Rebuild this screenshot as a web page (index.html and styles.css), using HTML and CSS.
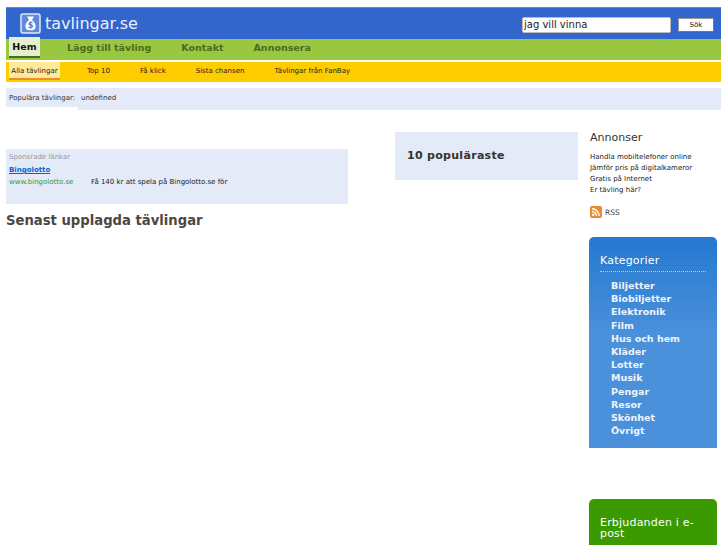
FILE: index.html
```html
<!DOCTYPE html>
<html lang="sv">
<head>
    <meta charset="UTF-8">
    <title>tavlingar.se</title>
    <link rel="stylesheet" href="styles.css">
</head>
<body>
    <div class="wrap">
        <header class="top">
            <a class="logo" href="#">
                <svg class="logo-icon" width="21" height="21" viewBox="0 0 21 21">
                    <rect x="1" y="1" width="19" height="19" rx="2" fill="#5f8ad8" stroke="#dfe8f8" stroke-width="1.5"/>
                    <path d="M7 3.500h7l-2 3.500c2.500 1.500 4 4.500 3.500 7.500-.3 2-2 2.800-5 2.800s-4.700-.8-5-2.800C5 11.500 6.500 8.500 9 7z" fill="#fff"/>
                    <text x="10.500" y="15" class="logo-dollar">$</text>
                </svg>
                <span>tavlingar.se</span>
            </a>
            <form class="search">
                <input class="search-input" type="text" value="jag vill vinna">
                <button class="search-btn" type="button">Sök</button>
            </form>
        </header>

        <nav class="main-nav">
            <a class="active" href="#">Hem</a>
            <a href="#">Lägg till tävling</a>
            <a href="#">Kontakt</a>
            <a href="#">Annonsera</a>
        </nav>

        <nav class="sub-nav">
            <a class="active" href="#">Alla tävlingar</a>
            <a href="#">Top 10</a>
            <a href="#">Få klick</a>
            <a href="#">Sista chansen</a>
            <a href="#">Tävlingar från FanBay</a>
        </nav>

        <div class="popular">
            <span class="popular-label">Populära tävlingar:</span>
            <span class="popular-value">undefined</span>
        </div>

        <div class="columns">
            <main class="content">
                <div class="sponsored">
                    <div class="sponsored-title">Sponsrade länkar</div>
                    <a class="sponsored-link" href="#">Bingolotto</a>
                    <div class="sponsored-row">
                        <span class="sponsored-url">www.bingolotto.se</span>
                        <span>Få 140 kr att spela på Bingolotto.se för</span>
                    </div>
                </div>
                <h1>Senast upplagda tävlingar</h1>
            </main>

            <section class="top-ten">
                <h2>10 populäraste</h2>
            </section>

            <aside class="sidebar">
                <h3>Annonser</h3>
                <ul class="ads">
                    <li><a href="#">Handla mobiltelefoner online</a></li>
                    <li><a href="#">Jämför pris på digitalkameror</a></li>
                    <li><a href="#">Gratis på Internet</a></li>
                    <li><a href="#">Er tävling här?</a></li>
                </ul>
                <a class="rss" href="#">
                    <svg width="12" height="12" viewBox="0 0 12 12">
                        <rect width="12" height="12" rx="2" fill="#f08a2c"/>
                        <circle cx="3.200" cy="8.800" r="1.200" fill="#fff"/>
                        <path d="M2 5.500a4.500 4.500 0 0 1 4.500 4.500M2 2.800a7.200 7.200 0 0 1 7.200 7.200" fill="none" stroke="#fff" stroke-width="1.400"/>
                    </svg>
                    RSS
                </a>

                <div class="box box-blue">
                    <h4>Kategorier</h4>
                    <ul>
                        <li>Biljetter</li>
                        <li>Biobiljetter</li>
                        <li>Elektronik</li>
                        <li>Film</li>
                        <li>Hus och hem</li>
                        <li>Kläder</li>
                        <li>Lotter</li>
                        <li>Musik</li>
                        <li>Pengar</li>
                        <li>Resor</li>
                        <li>Skönhet</li>
                        <li>Övrigt</li>
                    </ul>
                </div>

                <div class="box box-green">
                    <h4>Erbjudanden i e-post</h4>
                </div>
            </aside>
        </div>
    </div>
</body>
</html>
```

FILE: styles.css
```css
/* Reset */
* {
    margin: 0;
    padding: 0;
    box-sizing: border-box;
}

html, body {
    height: 545px;
    overflow: hidden;
}

body {
    font-family: "DejaVu Sans", sans-serif;
    background-color: #fff;
    color: #000;
}

a {
    text-decoration: none;
    color: inherit;
}

ul {
    list-style: none;
}

.wrap {
    width: 715px;
    margin-left: 6px;
    padding-top: 7px;
}

/* Header */
.top {
    height: 32px;
    background-color: #3366cc;
    border-top: 1px solid #5f86d6;
    display: flex;
    justify-content: space-between;
    align-items: center;
}

.logo {
    display: flex;
    align-items: center;
    gap: 4px;
    margin-left: 14px;
    color: #e8effa;
    font-size: 16px;
}

.logo-icon {
    display: block;
}

.logo-dollar {
    font-size: 8px;
    font-weight: bold;
    fill: #4a78cc;
    text-anchor: middle;
}

.search {
    display: flex;
    align-items: center;
    gap: 7px;
    margin: 2px 7px 0 0;
}

.search-input {
    width: 149px;
    height: 16px;
    border: 1px solid #bbb;
    border-radius: 2px;
    padding: 0 1px;
    font-family: "DejaVu Sans", sans-serif;
    font-size: 10px;
    color: #222;
}

.search-btn {
    width: 36px;
    height: 14px;
    margin-top: 1px;
    background-color: #fff;
    border: 1px solid #999;
    border-right-color: #777;
    border-bottom-color: #777;
    font-family: "DejaVu Sans", sans-serif;
    font-size: 7px;
    color: #222;
}

/* Main nav */
.main-nav {
    height: 21px;
    background-color: #99c73f;
    display: flex;
    padding-left: 3px;
}

.main-nav a {
    margin-right: 30px;
    font-size: 9.500px;
    font-weight: bold;
    line-height: 18px;
    white-space: nowrap;
    color: #4c6b1f;
}

.main-nav a.active {
    width: 31px;
    height: 21px;
    margin: -2px 27px 0 0;
    background-color: #e4efcf;
    border-bottom: 2px solid #4c6b1f;
    color: #111;
    text-align: center;
    line-height: 20px;
}

/* Sub nav */
.sub-nav {
    height: 20px;
    margin-top: 2px;
    background-color: #ffcc00;
    display: flex;
    align-items: flex-start;
    padding-left: 3px;
    font-size: 7px;
    color: #222;
}

.sub-nav a {
    margin-right: 30px;
    line-height: 16px;
    padding-top: 1px;
    white-space: nowrap;
}

.sub-nav a.active {
    width: 51px;
    height: 18px;
    background-color: #ffe99a;
    border-bottom: 2px solid #f08a2c;
    text-align: center;
    margin-right: 27px;
}

/* Popular */
.popular {
    height: 22px;
    margin-top: 6px;
    font-size: 7px;
    color: #333;
    display: flex;
    line-height: 20px;
}

.popular-label {
    width: 72px;
    height: 19px;
    padding-left: 3px;
    background-color: #e4eaf7;
    white-space: nowrap;
}

.popular-value {
    flex: 1;
    padding-left: 3px;
    background-color: #e4eaf7;
}

/* Columns */
.columns {
    display: flex;
    align-items: flex-start;
    margin-top: 21px;
}

.content {
    width: 342px;
    padding-top: 18px;
}

.sponsored {
    height: 55px;
    background-color: #e4eaf7;
    padding: 3px 3px;
    font-size: 7px;
}

.sponsored-title {
    color: #999;
    line-height: 10px;
}

.sponsored-link {
    display: block;
    margin-top: 2px;
    color: #0066cc;
    font-weight: bold;
    text-decoration: underline;
    line-height: 12px;
}

.sponsored-row {
    display: flex;
    line-height: 12px;
    color: #222;
}

.sponsored-url {
    width: 82px;
    color: #339933;
}

.content h1 {
    margin-top: 9px;
    font-size: 13.200px;
    color: #4d483f;
}

.top-ten {
    width: 183px;
    height: 48px;
    margin: 1px 0 0 47px;
    background-color: #e4eaf7;
    padding: 17px 12px;
}

.top-ten h2 {
    font-size: 11px;
    color: #333;
    letter-spacing: 0.3px;
}

/* Sidebar */
.sidebar {
    width: 128px;
    margin-left: 11px;
    font-size: 7px;
}

.sidebar h3 {
    margin-left: 1px;
    font-size: 11px;
    font-weight: normal;
    color: #333;
    line-height: 14px;
}

.ads {
    margin: 7px 0 0 1px;
    line-height: 11px;
    color: #222;
}

.rss {
    display: flex;
    align-items: center;
    gap: 3px;
    margin: 10px 0 0 1px;
    color: #444;
    font-size: 7.500px;
}

.box {
    border-radius: 5px 5px 0 0;
    color: #fff;
    padding: 18px 11px 0;
}

.box h4 {
    font-size: 11px;
    font-weight: normal;
    letter-spacing: 0.2px;
    line-height: 11px;
    border-bottom: 1px dotted rgba(255, 255, 255, 0.6);
}

.box-blue {
    height: 211px;
    margin-top: 19px;
    background: linear-gradient(#2478d0, #4a90db 45%);
}

.box-blue h4 {
    padding-bottom: 5px;
}

.box-blue ul {
    margin: 7px 0 0 11px;
    font-size: 9.500px;
    font-weight: bold;
    line-height: 13.200px;
    color: #eef4fc;
}

.box-green {
    height: 80px;
    margin-top: 51px;
    background-color: #3a9a00;
}

.box-green h4 {
    padding-bottom: 6px;
}
```
